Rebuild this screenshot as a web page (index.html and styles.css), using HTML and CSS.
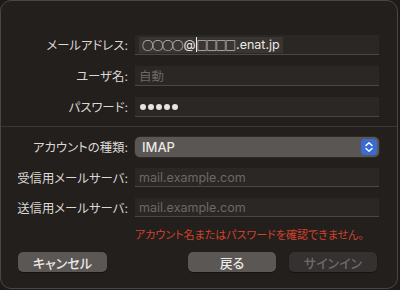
FILE: index.html
```html
<!DOCTYPE html>
<html lang="ja">
<head>
    <meta charset="UTF-8">
    <meta name="viewport" content="width=device-width, initial-scale=1.0">
    <title>アカウントを追加</title>
    <link rel="stylesheet" href="styles.css">
</head>
<body>
    <div class="sheet">
        <section class="form top">
            <label class="label">メールアドレス:</label>
            <div class="field">
                <span class="value selected"><span class="marks">○○○○</span>@<i class="caret"></i><span class="boxes">□□□□</span>.enat.jp</span>
            </div>

            <label class="label">ユーザ名:</label>
            <div class="field"><span class="placeholder">自動</span></div>

            <label class="label">パスワード:</label>
            <div class="field dots">
                <span class="dot"></span><span class="dot"></span><span class="dot"></span><span class="dot"></span><span class="dot"></span>
            </div>
        </section>

        <hr class="divider">

        <section class="form bottom">
            <label class="label">アカウントの種類:</label>
            <div class="popup">
                <span class="popup-value">IMAP</span>
                <span class="stepper">
                    <svg width="10" height="12" viewBox="0 0 10 12">
                        <path d="M2 4.5 L5 1.8 L8 4.5 M2 7.5 L5 10.2 L8 7.5" fill="none" stroke="#fff" stroke-width="1.5" stroke-linecap="round" stroke-linejoin="round"/>
                    </svg>
                </span>
            </div>

            <label class="label">受信用メールサーバ:</label>
            <div class="field"><span class="placeholder">mail.example.com</span></div>

            <label class="label">送信用メールサーバ:</label>
            <div class="field"><span class="placeholder">mail.example.com</span></div>
        </section>

        <p class="error">アカウント名またはパスワードを確認できません。</p>

        <footer class="actions">
            <button class="btn">キャンセル</button>
            <div class="right">
                <button class="btn">戻る</button>
                <button class="btn disabled">サインイン</button>
            </div>
        </footer>
    </div>
</body>
</html>
```

FILE: styles.css
```css
* {
    margin: 0;
    padding: 0;
    box-sizing: border-box;
}

body {
    background: #1e1a18;
    font-family: Inter, "Noto Sans CJK JP", sans-serif;
    font-feature-settings: "palt";
    width: 400px;
    height: 290px;
    overflow: hidden;
}

.sheet {
    width: 398px;
    height: 289px;
    background: #231f1d;
    border: 1px solid #4a4644;
    border-radius: 11px;
    padding-top: 34px;
}

.form {
    display: grid;
    grid-template-columns: 127px 244px;
    column-gap: 7px;
    row-gap: 11px;
}

.top {
    grid-auto-rows: 20px;
}

.bottom {
    grid-template-rows: 20px 19px 19px;
    row-gap: 11px;
    margin-top: 10px;
}

.label {
    color: #dcd8d5;
    font-size: 12.4px;
    text-align: right;
    align-self: center;
    white-space: nowrap;
}

.field {
    background: #2b2725;
    border-bottom: 1px solid #4b4745;
    display: flex;
    align-items: center;
    padding-left: 4px;
    font-size: 12.5px;
}

.value {
    color: #ebe7e4;
    display: flex;
    align-items: center;
    height: 16px;
    padding: 0 3px;
}

.marks {
    font-size: 11.5px;
    letter-spacing: -1.5px;
    margin-right: 1.5px;
    font-feature-settings: normal;
    font-family: "Noto Sans CJK JP", sans-serif;
}

.boxes {
    font-size: 11px;
    letter-spacing: -1.5px;
    margin-right: 1.5px;
    font-feature-settings: normal;
    font-family: "Noto Sans CJK JP", sans-serif;
}

.selected {
    background: #393533;
}

.caret {
    display: inline-block;
    width: 1px;
    height: 15px;
    background: #f2f2f2;
}

.placeholder {
    color: #6c6866;
}

.dots {
    gap: 2px;
    padding-left: 5px;
}

.dot {
    width: 6px;
    height: 6px;
    border-radius: 50%;
    background: #e8e4e1;
}

.divider {
    border: 0;
    border-top: 1px solid #3a3634;
    margin-top: 9px;
}

.popup {
    background: #5a5653;
    border-radius: 5px;
    display: flex;
    align-items: center;
    justify-content: space-between;
    padding: 0 2px 0 7px;
    box-shadow: 0 0 0 0.5px #3a3634;
}

.popup-value {
    color: #ebe7e4;
    font-size: 13px;
    font-weight: 500;
}

.stepper {
    width: 16px;
    height: 16px;
    border-radius: 4px;
    background: #3a6bd5;
    display: flex;
    align-items: center;
    justify-content: center;
}

.error {
    color: #d2412b;
    font-size: 11px;
    margin: 11px 0 0 134px;
    line-height: 14px;
    white-space: nowrap;
}

.actions {
    display: flex;
    justify-content: space-between;
    padding: 0 20px 0 17px;
    margin-top: 10px;
}

.right {
    display: flex;
    gap: 13px;
}

.btn {
    width: 88px;
    height: 20px;
    border: none;
    border-radius: 5px;
    background: #5b5755;
    color: #ebe7e4;
    font-family: Inter, "Noto Sans CJK JP", sans-serif;
    font-feature-settings: "palt";
    font-size: 13px;
    font-weight: 500;
    box-shadow: 0 0.5px 1px rgba(0, 0, 0, 0.4);
}

.actions > .btn {
    width: 89px;
}

.disabled {
    background: #353130;
    color: #6e6a68;
}
```
